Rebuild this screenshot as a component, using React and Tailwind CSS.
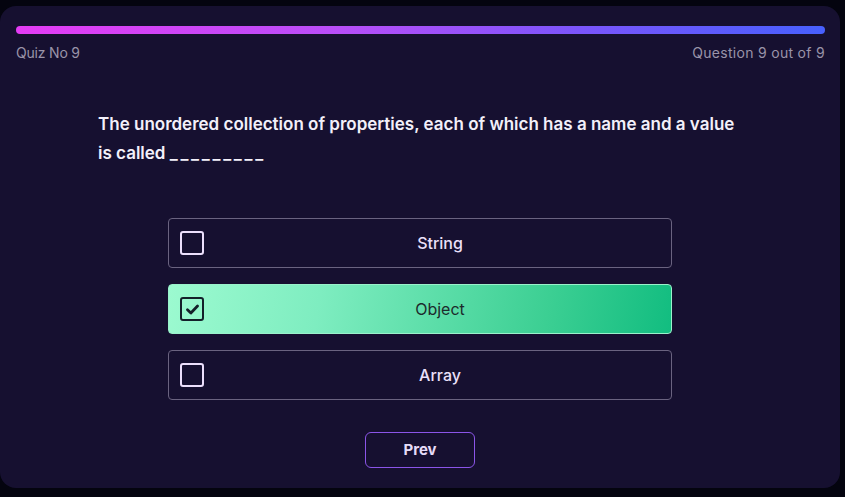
import React from "react";

function Box({ checked }) {
  if (checked) {
    return (
      <div className="w-6 h-6 shrink-0 rounded-[3px] border-[2.5px] border-[#14202a] flex items-center justify-center">
        <svg width="15" height="15" viewBox="0 0 14 14" fill="none">
          <path d="M2.3 7.2 L5.5 10.3 L11.7 3.8" stroke="#14202a" strokeWidth="2.6" strokeLinecap="round" strokeLinejoin="round" />
        </svg>
      </div>
    );
  }
  return <div className="w-6 h-6 shrink-0 rounded-[3px] border-2 border-[#ecdffc]" />;
}

function Option({ label, checked }) {
  return (
    <div
      className={
        checked
          ? "h-[50px] flex items-center pl-[11px] rounded-[4px] border border-[#9af2cb] bg-[linear-gradient(100deg,#9cfad0_0%,#7eedc0_30%,#3ccf93_75%,#12bd80_100%)]"
          : "h-[50px] flex items-center pl-[11px] rounded-[4px] border border-[#6a6380]"
      }
    >
      <Box checked={checked} />
      <div
        className={
          checked
            ? "flex-1 ml-[5px] text-center text-[16px] text-[#1d2b2c]"
            : "flex-1 ml-[5px] text-center text-[16px] font-medium text-[#ebe0fa]"
        }
      >
        {label}
      </div>
    </div>
  );
}

export default function App() {
  return (
    <div
      className="w-[845px] h-[497px] bg-[#04040f] pt-[6px] pr-[5px] pb-[9px]"
      style={{ fontFamily: "Inter, 'Noto Sans', sans-serif" }}
    >
      <div className="h-full rounded-[16px] bg-[#161030] pt-[20px] pl-4 pr-[15px] flex flex-col">
        <div className="h-2 rounded-full bg-[linear-gradient(90deg,#e43cf4_0%,#b84ef8_40%,#7a55fb_70%,#4760fd_100%)]" />
        <div className="mt-[10px] flex justify-between text-[14px] leading-[18px] text-[#9a94a9]">
          <span className="tracking-[-0.2px]">Quiz No 9</span>
          <span className="tracking-[0.3px]">Question 9 out of 9</span>
        </div>
        <div className="mt-[48px] pl-[82px] pr-[85px] text-[17px] leading-[29px] font-semibold text-[#f3f0fa]">
          <div>The unordered collection of properties, each of which has a name and a value</div>
          <div>
            is called <span className="tracking-[2.7px]">_________</span>
          </div>
        </div>
        <div className="mt-[50px] w-[504px] ml-[152px] flex flex-col gap-4">
          <Option label="String" />
          <Option label="Object" checked />
          <Option label="Array" />
        </div>
        <div className="mt-[32px] flex justify-center pr-[1px]">
          <div className="w-[110px] h-[36px] rounded-[6px] border border-[#8b55e8] flex items-center justify-center text-[15px] font-bold text-[#e6dcf8]">
            Prev
          </div>
        </div>
      </div>
    </div>
  );
}
